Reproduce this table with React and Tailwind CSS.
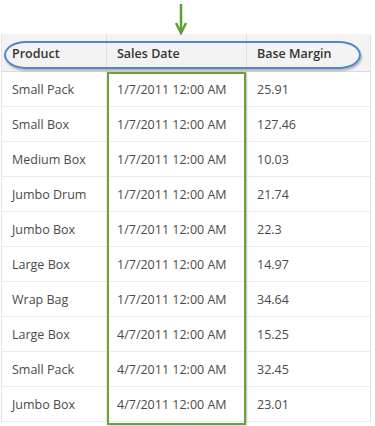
import React from 'react';

const rows = [
  ['Small Pack', '1/7/2011 12:00 AM', '25.91'],
  ['Small Box', '1/7/2011 12:00 AM', '127.46'],
  ['Medium Box', '1/7/2011 12:00 AM', '10.03'],
  ['Jumbo Drum', '1/7/2011 12:00 AM', '21.74'],
  ['Jumbo Box', '1/7/2011 12:00 AM', '22.3'],
  ['Large Box', '1/7/2011 12:00 AM', '14.97'],
  ['Wrap Bag', '1/7/2011 12:00 AM', '34.64'],
  ['Large Box', '4/7/2011 12:00 AM', '15.25'],
  ['Small Pack', '4/7/2011 12:00 AM', '32.45'],
  ['Jumbo Box', '4/7/2011 12:00 AM', '23.01'],
];

const App = () => {
  return (
    <div className="relative w-[375px] h-[426px] overflow-hidden bg-white font-['Open_Sans',sans-serif] text-[12.5px] text-[#4a4a4a]">
      {/* ARROW */}
      <svg className="absolute left-[174px] top-[3px]" width="14" height="32" viewBox="0 0 14 32">
        <line x1="7" y1="1" x2="7" y2="27" stroke="#5f9e33" strokeWidth="2.5" />
        <path d="M2 20 L7 30 L12 20" fill="none" stroke="#5f9e33" strokeWidth="2.5" strokeLinejoin="miter" />
      </svg>

      {/* GRID */}
      <div className="pt-[34px] pl-px">
        <div className="w-[370px] border-l border-r border-[#e4e4e4]">
          <div className="grid grid-cols-[105px_140px_123px] h-[38px] bg-[#f3f3f3] border-b border-[#dcdcdc] font-semibold text-[#333]">
            <div className="flex items-center pt-[3px] pl-[10px] border-r border-[#e0e0e0]">Product</div>
            <div className="flex items-center pt-[3px] pl-[10px] border-r border-[#e0e0e0]">Sales Date</div>
            <div className="flex items-center pt-[3px] pl-[10px]">Base Margin</div>
          </div>
          {rows.map((r, i) => (
            <div key={i} className="grid grid-cols-[105px_140px_123px] h-[35px] border-b border-[#ececec]">
              <div className="flex items-center pt-[3px] pl-[10px] border-r border-[#ececec]">{r[0]}</div>
              <div className="flex items-center pt-[3px] pl-[10px] border-r border-[#ececec]">{r[1]}</div>
              <div className="flex items-center pt-[3px] pl-[10px]">{r[2]}</div>
            </div>
          ))}
        </div>
      </div>

      {/* HIGHLIGHTS */}
      <div className="absolute left-[4px] top-[41px] w-[357px] h-[28px] rounded-[22px/14px] border-2 border-[#4f86cf] shadow-[1px_2px_2px_rgba(0,0,0,0.25)]" />
      <div className="absolute left-[107px] top-[72px] w-[139px] h-[353px] border-[2.5px] border-[#6aa23a] shadow-[1px_1px_2px_rgba(0,0,0,0.2)]" />
    </div>
  );
};

export default App;
